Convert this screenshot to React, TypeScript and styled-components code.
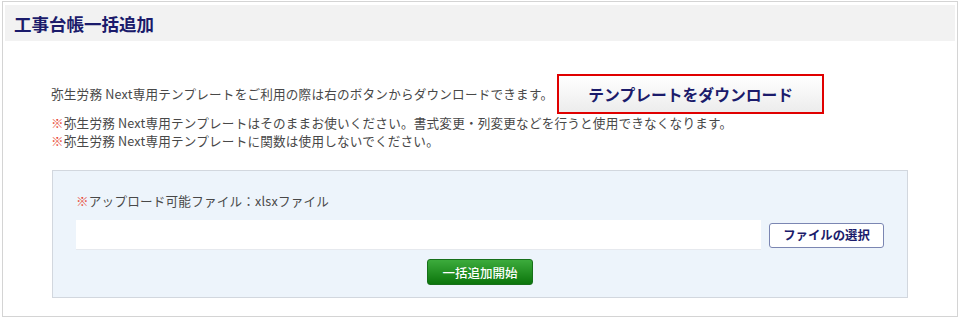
import React from "react";
import styled, { createGlobalStyle } from "styled-components";

const GlobalStyle = createGlobalStyle`
  body {
    margin: 0;
    background: #ffffff;
    font-family: "Noto Sans CJK JP", "Noto Sans", sans-serif;
    color: #484848;
  }
  * {
    box-sizing: border-box;
  }
`;

const Frame = styled.div`
  width: 956px;
  height: 316px;
  margin: 1px 0 0 2px;
  padding: 3px 2px;
  border: 1px solid #d4d4d4;
  background: #ffffff;
`;

const Header = styled.div`
  height: 36px;
  display: flex;
  align-items: center;
  padding-left: 9px;
  background-color: #f2f2f2;
  h1 {
    margin: 0;
    font-size: 17.5px;
    font-weight: 700;
    color: #1b1b6b;
  }
`;

const Content = styled.div`
  padding-left: 46px;
`;

const IntroRow = styled.div`
  display: flex;
  align-items: center;
  gap: 4px;
  margin-top: 33px;
  height: 40px;
`;

const Text = styled.p`
  margin: 0;
  font-size: 12.6px;
  line-height: 18px;
  letter-spacing: 0.2px;
  white-space: nowrap;
`;

const Mark = styled.span`
  color: #e8412c;
`;

const DownloadButton = styled.button`
  width: 267px;
  height: 40px;
  border: 2px solid #e00000;
  background: linear-gradient(#ffffff, #ececec);
  font-family: inherit;
  font-size: 15.8px;
  font-weight: 700;
  color: #1b1b6b;
  cursor: pointer;
`;

const Notes = styled.div`
  display: flex;
  flex-direction: column;
`;

const UploadPanel = styled.div`
  width: 856px;
  margin: 20px 0 0 1px;
  padding: 21px 23px 12px;
  border: 1px solid #d2d7de;
  background-color: #edf4fb;
`;

const FileRow = styled.div`
  display: flex;
  align-items: center;
  gap: 8px;
  margin-top: 10px;
`;

const FileInput = styled.div`
  width: 685px;
  height: 30px;
  background: #ffffff;
  border-bottom: 1px solid #e6e9ee;
`;

const SelectButton = styled.button`
  width: 115px;
  height: 25px;
  padding: 0;
  border: 1px solid #7b86b2;
  border-radius: 3px;
  background: #ffffff;
  font-family: inherit;
  font-size: 12.4px;
  font-weight: 700;
  color: #1b1b6b;
  cursor: pointer;
`;

const Actions = styled.div`
  display: flex;
  justify-content: center;
  margin-top: 9px;
`;

const StartButton = styled.button`
  width: 106px;
  height: 26px;
  padding: 0;
  border: 1px solid #17701a;
  border-radius: 3px;
  background: linear-gradient(#3cab3c, #0c760c);
  font-family: inherit;
  font-size: 12.5px;
  font-weight: 500;
  color: #ffffff;
  cursor: pointer;
`;

const App: React.FC = () => {
  return (
    <>
      <GlobalStyle />
      <Frame>
        <Header>
          <h1>工事台帳一括追加</h1>
        </Header>
        <Content>
          <IntroRow>
            <Text>弥生労務 Next専用テンプレートをご利用の際は右のボタンからダウンロードできます。</Text>
            <DownloadButton type="button">テンプレートをダウンロード</DownloadButton>
          </IntroRow>
          <Notes>
            <Text>
              <Mark>※</Mark>弥生労務 Next専用テンプレートはそのままお使いください。書式変更・列変更などを行うと使用できなくなります。
            </Text>
            <Text>
              <Mark>※</Mark>弥生労務 Next専用テンプレートに関数は使用しないでください。
            </Text>
          </Notes>
          <UploadPanel>
            <Text>
              <Mark>※</Mark>アップロード可能ファイル：xlsxファイル
            </Text>
            <FileRow>
              <FileInput />
              <SelectButton type="button">ファイルの選択</SelectButton>
            </FileRow>
            <Actions>
              <StartButton type="button">一括追加開始</StartButton>
            </Actions>
          </UploadPanel>
        </Content>
      </Frame>
    </>
  );
};

export default App;
